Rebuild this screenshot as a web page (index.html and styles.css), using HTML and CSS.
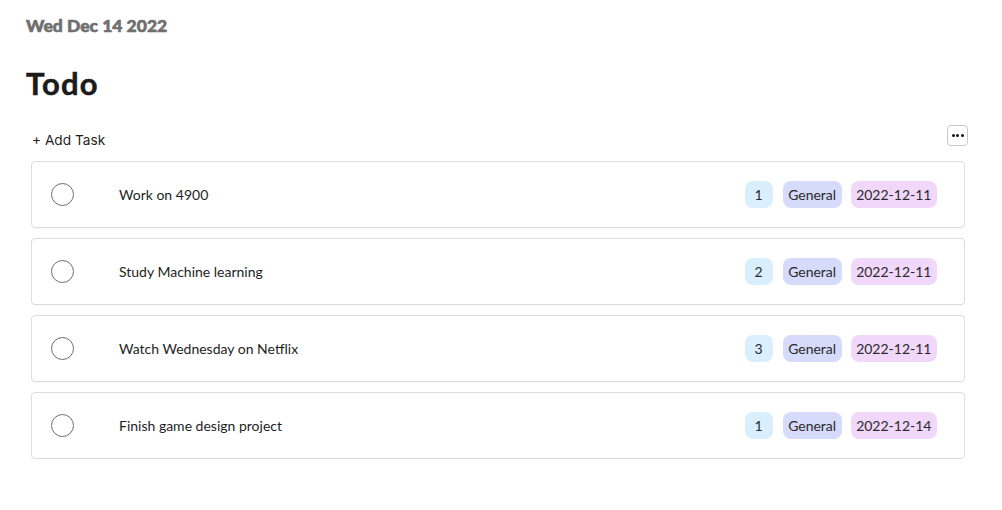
FILE: index.html
```html
<!DOCTYPE html>
<html>
<head>
<meta charset="utf-8">
<link rel="stylesheet" href="styles.css">
</head>
<body>
<main class="page">
  <div class="date">Wed Dec 14 2022</div>
  <h1 class="title">Todo</h1>
  <div class="toolbar">
    <button class="add">+ Add Task</button>
    <button class="more" aria-label="More"><span></span><span></span><span></span></button>
  </div>
  <ul class="list">
    <li class="card">
      <span class="check"></span>
      <span class="name">Work on 4900</span>
      <span class="tags"><span class="tag num">1</span><span class="tag cat">General</span><span class="tag due">2022-12-11</span></span>
    </li>
    <li class="card">
      <span class="check"></span>
      <span class="name">Study Machine learning</span>
      <span class="tags"><span class="tag num">2</span><span class="tag cat">General</span><span class="tag due">2022-12-11</span></span>
    </li>
    <li class="card">
      <span class="check"></span>
      <span class="name">Watch Wednesday on Netflix</span>
      <span class="tags"><span class="tag num">3</span><span class="tag cat">General</span><span class="tag due">2022-12-11</span></span>
    </li>
    <li class="card">
      <span class="check"></span>
      <span class="name">Finish game design project</span>
      <span class="tags"><span class="tag num">1</span><span class="tag cat">General</span><span class="tag due">2022-12-14</span></span>
    </li>
  </ul>
</main>
</body>
</html>
```
FILE: styles.css
```css
* { box-sizing: border-box; }
body {
  margin: 0;
  background: #fff;
  font-family: Lato, "Noto Sans", sans-serif;
  color: #1e1e1e;
}
.page {
  padding: 16px 34px 0 26px;
}
.date {
  font-weight: 900;
  font-size: 17.5px;
  line-height: 20px;
  color: #6f6f6f;
  -webkit-text-stroke: 0.6px #6f6f6f;
}
.title {
  margin: 28px 0 0;
  font-size: 31px;
  line-height: 38px;
  font-weight: 700;
  color: #1b1b1b;
  letter-spacing: 1.2px;
  -webkit-text-stroke: 0.5px #1b1b1b;
}
.toolbar {
  margin-top: 23px;
  display: flex;
  align-items: flex-start;
  justify-content: space-between;
  padding-left: 6px;
}
.add {
  font-family: Inter, "Noto Sans", sans-serif;
  font-size: 13.7px;
  background: none;
  border: 0;
  padding: 0;
  margin-top: 7px;
  color: #1e1e1e;
  line-height: 16px;
}
.more {
  width: 21px;
  height: 21px;
  border: 1px solid #c8c8c8;
  border-radius: 4px;
  background: #fff;
  padding: 0;
  display: flex;
  align-items: center;
  justify-content: center;
  gap: 1.5px;
}
.more span {
  width: 3px;
  height: 3px;
  border-radius: 50%;
  background: #111;
}
.list {
  list-style: none;
  margin: 13px 0 0;
  padding: 0 3px 0 5px;
  display: flex;
  flex-direction: column;
  gap: 10px;
}
.card {
  height: 67px;
  border: 1px solid #dcdcdc;
  border-radius: 4px;
  display: flex;
  align-items: center;
  padding: 0 27px 0 19px;
  box-shadow: 0 1px 1px rgba(0,0,0,0.03);
}
.check {
  width: 23px;
  height: 23px;
  border: 1px solid #6e6e6e;
  border-radius: 50%;
  flex: none;
}
.name {
  margin-left: 45px;
  font-size: 14px;
  color: #1e1e1e;
  flex: 1;
}
.tags {
  display: flex;
  gap: 9px;
}
.tag {
  height: 27px;
  line-height: 27px;
  border-radius: 8px;
  font-size: 14px;
  color: #2a2a2a;
  padding: 0 5.5px;
}
.num { background: #d9effd; padding: 0 10px; margin-right: 1px; }
.cat { background: #d6dafb; }
.due { background: #f1d8fb; }
```
